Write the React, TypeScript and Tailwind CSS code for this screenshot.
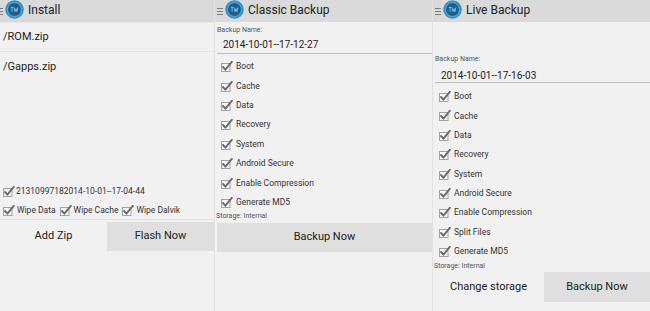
import React from "react";

function Check() {
  return (
    <svg width="12" height="11" viewBox="0 0 12 11" className="shrink-0">
      <rect x="0.5" y="2.5" width="8.5" height="8" fill="#f7f7f7" stroke="#a3a3a3" strokeWidth="1" />
      <path d="M2 6 L4.4 8.7 L10.8 0.8" fill="none" stroke="#6b6b6b" strokeWidth="1.9" strokeLinecap="round" strokeLinejoin="round" />
    </svg>
  );
}

function Logo() {
  return (
    <svg width="19" height="19" viewBox="0 0 18 18" className="shrink-0 -mt-[3px]">
      <circle cx="9" cy="9" r="8.8" fill="#3391cc" />
      <circle cx="9" cy="9" r="6.6" fill="#1b5f8c" />
      <circle cx="9" cy="9" r="6.6" fill="none" stroke="#6fb6e0" strokeWidth="0.8" />
      <path d="M5.5 7 H8 M6.7 7 V11 M8.6 7 L9.5 11 L10.4 8.2 L11.3 11 L12.2 7" fill="none" stroke="#8cc8ea" strokeWidth="0.8" />
    </svg>
  );
}

function Burger() {
  return (
    <div className="flex flex-col gap-[2px] shrink-0">
      <div className="w-[6px] h-[1px] bg-[#7a7a7a]" />
      <div className="w-[6px] h-[1px] bg-[#7a7a7a]" />
      <div className="w-[6px] h-[1px] bg-[#7a7a7a]" />
    </div>
  );
}

function Header({ title, first }: { title: string; first?: boolean }) {
  return (
    <div className={"h-[22px] bg-[#dadada] flex items-center shrink-0 " + (first ? "pl-0" : "pl-[2px]")}>
      {first ? (
        <div className="w-[3px] overflow-hidden flex justify-end"><Burger /></div>
      ) : (
        <Burger />
      )}
      <div className="ml-[2px]"><Logo /></div>
      <span className="ml-[4px] text-[12px] text-[#222] -mt-[2px]">{title}</span>
    </div>
  );
}

function CheckRow({ label }: { label: string }) {
  return (
    <div className="h-[19.4px] flex items-center pl-[6px] shrink-0">
      <Check />
      <span className="ml-[3px] text-[8.5px] text-[#333]">{label}</span>
    </div>
  );
}

export default function App() {
  const classic = ["Boot", "Cache", "Data", "Recovery", "System", "Android Secure", "Enable Compression", "Generate MD5"];
  const live = ["Boot", "Cache", "Data", "Recovery", "System", "Android Secure", "Enable Compression", "Split Files", "Generate MD5"];
  return (
    <div className="w-[650px] h-[311px] flex bg-[#f1f1f1] overflow-hidden" style={{ fontFamily: "Roboto, 'Noto Sans', sans-serif" }}>
      {/* Install */}
      <div className="w-[214px] flex flex-col shrink-0">
        <Header title="Install" first />
        <div className="h-[160px] flex flex-col border-t border-[#e6e6e6]">
          <div className="h-[29px] flex items-center pl-[3px] pt-[1px] text-[11px] text-[#222] border-b border-[#e4e4e4]">/ROM.zip</div>
          <div className="h-[30px] flex items-center pl-[3px] pt-[1px] text-[11px] text-[#222]">/Gapps.zip</div>
        </div>
        <div className="h-[19px] flex items-center pl-[3px]">
          <Check />
          <span className="ml-[1px] text-[8.5px] text-[#333]">21310997182014-10-01--17-04-44</span>
        </div>
        <div className="h-[19px] flex items-center pl-[3px] border-b border-[#e0e0e0]">
          <Check />
          <span className="ml-[2px] text-[8.5px] text-[#333]">Wipe Data</span>
          <div className="ml-[4px]"><Check /></div>
          <span className="ml-[2px] text-[8.5px] text-[#333]">Wipe Cache</span>
          <div className="ml-[4px]"><Check /></div>
          <span className="ml-[2px] text-[8.5px] text-[#333]">Wipe Dalvik</span>
        </div>
        <div className="mt-[2px] h-[29px] flex">
          <div className="w-[107px] flex items-center justify-center text-[11px] text-[#222]">Add Zip</div>
          <div className="flex-1 bg-[#dfdfdf] flex items-center justify-center text-[11px] text-[#222]">Flash Now</div>
        </div>
      </div>

      {/* Classic Backup */}
      <div className="w-[218px] flex flex-col shrink-0 border-l border-[#e2e2e2]">
        <Header title="Classic Backup" />
        <div className="mt-[3px] h-[11px] flex items-center pl-[2px] text-[7px] text-[#555]">Backup Name:</div>
        <div className="ml-[2px] h-[18px] flex items-center pl-[6px] text-[10px] text-[#222] border-b border-[#bdbdbd]">2014-10-01--17-12-27</div>
        <div className="h-[3px]" />
        {classic.map((l) => (
          <CheckRow key={l} label={l} />
        ))}
        <div className="h-[9px] flex items-center pl-[1px] text-[7px] text-[#555]">Storage: Internal</div>
        <div className="mt-[1.5px] h-[29px] bg-[#dfdfdf] flex items-center justify-center text-[11px] text-[#222] ml-[2px]">Backup Now</div>
      </div>

      {/* Live Backup */}
      <div className="flex-1 flex flex-col border-l border-[#e2e2e2]">
        <Header title="Live Backup" />
        <div className="mt-[31px] h-[11px] flex items-center pl-[2px] pt-[1px] text-[7px] text-[#555]">Backup Name:</div>
        <div className="ml-[2px] mt-[1px] h-[18px] flex items-center pl-[6px] pt-[3px] text-[10px] text-[#222] border-b border-[#bdbdbd]">2014-10-01--17-16-03</div>
        <div className="h-[3.8px]" />
        {live.map((l) => (
          <CheckRow key={l} label={l} />
        ))}
        <div className="h-[9px] flex items-center pl-[1px] text-[7px] text-[#555]">Storage: Internal</div>
        <div className="mt-[2px] h-[30px] flex">
          <div className="w-[111px] flex items-center justify-center text-[11px] text-[#222]">Change storage</div>
          <div className="flex-1 bg-[#dfdfdf] flex items-center justify-center text-[11px] text-[#222]">Backup Now</div>
        </div>
      </div>
    </div>
  );
}
